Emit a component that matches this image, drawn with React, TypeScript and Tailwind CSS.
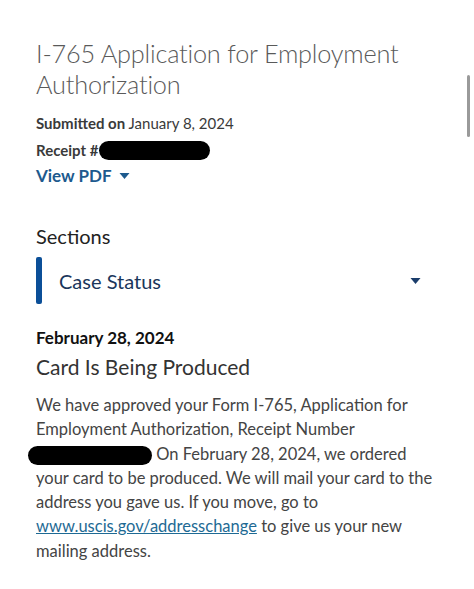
import React from 'react';

const Caret: React.FC<{ className?: string }> = ({ className }) => (
  <svg viewBox="0 0 10 6" className={className} fill="currentColor">
    <path d="M0 0h10L5 6z" />
  </svg>
);

const App: React.FC = () => {
  return (
    <div
      className="relative w-[474px] h-[589px] bg-white overflow-hidden"
      style={{ fontFamily: 'Lato, "Liberation Sans", sans-serif' }}
    >
      {/* scrollbar */}
      <div className="absolute right-[4px] top-[75px] w-[3px] h-[62px] bg-[#9a9a9a] rounded-full" />

      <div className="pl-[36px] pr-[10px] pt-[38px]">
        <h1 className="text-[25.3px] leading-[31px] font-light text-[#5a5a5a] tracking-[-0.2px] pr-[40px]">
          I-765 Application for Employment Authorization
        </h1>

        <div className="mt-[10px] text-[15px] leading-[27px] text-[#3a3a3a]">
          <p>
            <span className="font-bold">Submitted on</span> January 8, 2024
          </p>
          <p className="flex items-center">
            <span className="font-bold">Receipt #</span>
            <span className="ml-[1px] inline-block w-[111px] h-[19px] bg-black rounded-full" />
          </p>
        </div>

        <button className="mt-[-1px] flex items-center gap-[7px] text-[17px] leading-[26px] font-bold text-[#1d5a8e]">
          View PDF
          <Caret className="w-[11px] h-[6px]" />
        </button>

        <h2 className="mt-[34px] text-[20px] leading-[26px] text-[#222]">Sections</h2>

        <div className="mt-[8px] flex items-center h-[47px]">
          <div className="w-[6px] h-full bg-[#0b4f98] rounded-[2px]" />
          <span className="ml-[17px] text-[20px] text-[#1a365b]">Case Status</span>
          <Caret className="ml-auto mr-[43px] w-[11px] h-[6px] text-[#1a3d6b]" />
        </div>

        <p className="mt-[22px] text-[17px] leading-[24px] font-bold text-[#111]">February 28, 2024</p>
        <h3 className="mt-[3px] text-[21px] leading-[28px] text-[#333]">Card Is Being Produced</h3>

        <p className="mt-[12px] text-[16.5px] leading-[24.3px] text-[#444] whitespace-nowrap">
          We have approved your Form I-765, Application for
          <br />
          Employment Authorization, Receipt Number
          <br />
          <span className="inline-block align-middle ml-[-8px] w-[124px] h-[19px] bg-black rounded-full" /> On
          February 28, 2024, we ordered
          <br />
          your card to be produced. We will mail your card to the
          <br />
          address you gave us. If you move, go to
          <br />
          <a href="#" className="underline text-[#1e6a94]">
            www.uscis.gov/addresschange
          </a>{' '}
          to give us your new
          <br />
          mailing address.
        </p>
      </div>
    </div>
  );
};

export default App;
